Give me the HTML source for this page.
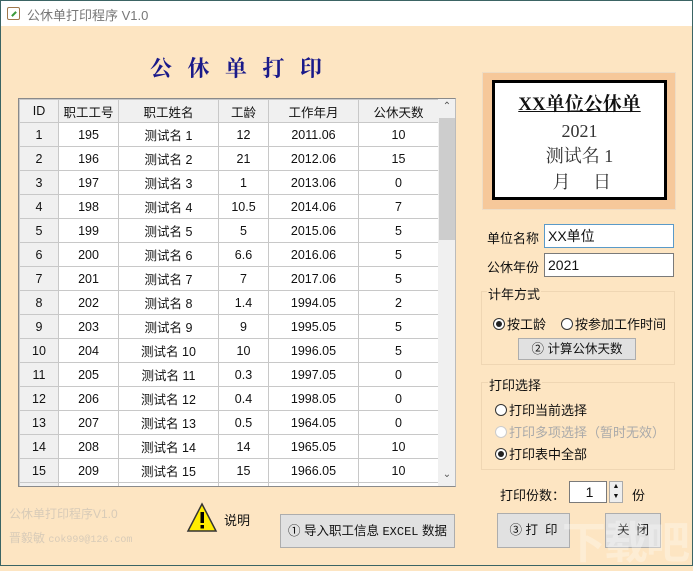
<!DOCTYPE html><html><head><meta charset="utf-8"><style>
*{margin:0;padding:0;box-sizing:border-box}
body{width:693px;height:566px;overflow:hidden;background:#fde5c2;font-family:"Liberation Sans","Noto Sans CJK SC",sans-serif;font-size:13px;color:#111;position:relative}
.abs{position:absolute}
#win{position:absolute;left:0;top:0;width:693px;height:566px;border:1px solid #3b6464}
#title{left:1px;top:1px;width:691px;height:25px;background:#fff;color:#777;font-size:13px}
table{border-collapse:collapse;table-layout:fixed;background:#fff}
td{border:1px solid #c8c8c8;height:24px;text-align:center;font-size:12.5px;padding:0;white-space:nowrap}
tr.h td{background:#f0f0f0;height:23px}
td.id{background:#f0f0f0}
.btn{position:absolute;background:#e1e1e1;border:1px solid #adadad;text-align:center;font-size:12.5px}
.inp{position:absolute;background:#fff;border:1px solid #7a7a7a;padding-left:3px;font-size:14px}
.grp{position:absolute;border:1px solid #efd6b3}
.rad{display:inline-block;width:12px;height:12px;border:1px solid #333;border-radius:50%;background:#fff;vertical-align:-1px;margin-right:2px;position:relative}
.rad.on:after{content:"";position:absolute;left:2px;top:2px;width:6px;height:6px;border-radius:50%;background:#222}
</style></head><body><div id="win"></div>
<div class="abs" id="title"><div class="abs" style="left:6px;top:6px;width:13px;height:13px;border:1px solid #a0774b;border-radius:2px;background:#fff"><div class="abs" style="left:3px;top:5px;width:6px;height:2px;background:#3a9a3a;transform:rotate(-45deg)"></div></div><span class="abs" style="left:26px;top:4px">公休单打印程序 V1.0</span></div>
<div class="abs" style="left:150px;top:52px;font-size:22px;font-weight:bold;color:#1a1a8a;letter-spacing:15.5px;font-family:'Liberation Serif','Noto Serif CJK SC',serif">公休单打印</div>
<div class="abs" style="left:18px;top:98px;width:438px;height:389px;border:1px solid #8a8a8a;border-right-color:#bbb;overflow:hidden;background:#fff">
<table style="width:419px"><colgroup><col style="width:39px"><col style="width:60px"><col style="width:100px"><col style="width:50px"><col style="width:90px"><col style="width:80px"></colgroup>
<tr class="h"><td>ID</td><td>职工工号</td><td>职工姓名</td><td>工龄</td><td>工作年月</td><td>公休天数</td></tr>
<tr><td class="id">1</td><td>195</td><td>测试名 1</td><td>12</td><td>2011.06</td><td>10</td></tr>
<tr><td class="id">2</td><td>196</td><td>测试名 2</td><td>21</td><td>2012.06</td><td>15</td></tr>
<tr><td class="id">3</td><td>197</td><td>测试名 3</td><td>1</td><td>2013.06</td><td>0</td></tr>
<tr><td class="id">4</td><td>198</td><td>测试名 4</td><td>10.5</td><td>2014.06</td><td>7</td></tr>
<tr><td class="id">5</td><td>199</td><td>测试名 5</td><td>5</td><td>2015.06</td><td>5</td></tr>
<tr><td class="id">6</td><td>200</td><td>测试名 6</td><td>6.6</td><td>2016.06</td><td>5</td></tr>
<tr><td class="id">7</td><td>201</td><td>测试名 7</td><td>7</td><td>2017.06</td><td>5</td></tr>
<tr><td class="id">8</td><td>202</td><td>测试名 8</td><td>1.4</td><td>1994.05</td><td>2</td></tr>
<tr><td class="id">9</td><td>203</td><td>测试名 9</td><td>9</td><td>1995.05</td><td>5</td></tr>
<tr><td class="id">10</td><td>204</td><td>测试名 10</td><td>10</td><td>1996.05</td><td>5</td></tr>
<tr><td class="id">11</td><td>205</td><td>测试名 11</td><td>0.3</td><td>1997.05</td><td>0</td></tr>
<tr><td class="id">12</td><td>206</td><td>测试名 12</td><td>0.4</td><td>1998.05</td><td>0</td></tr>
<tr><td class="id">13</td><td>207</td><td>测试名 13</td><td>0.5</td><td>1964.05</td><td>0</td></tr>
<tr><td class="id">14</td><td>208</td><td>测试名 14</td><td>14</td><td>1965.05</td><td>10</td></tr>
<tr><td class="id">15</td><td>209</td><td>测试名 15</td><td>15</td><td>1966.05</td><td>10</td></tr>
<tr><td class="id"></td><td></td><td></td><td></td><td></td><td></td></tr>
</table>
<div class="abs" style="left:419px;top:0;width:18px;height:387px;background:#f0f0f0"><div class="abs" style="left:0;top:2px;width:18px;text-align:center;font-size:10px;color:#555">&#8963;</div><div class="abs" style="left:1px;top:19px;width:16px;height:122px;background:#cdcdcd"></div><div class="abs" style="left:0;top:370px;width:18px;text-align:center;font-size:10px;color:#555">&#8964;</div></div>
</div>
<div class="abs" style="left:482px;top:72px;width:194px;height:138px;background:#f6c89a;border:1px solid #eedcc4"></div>
<div class="abs" style="left:492px;top:80px;width:175px;height:120px;background:#fff;border:3px solid #000;text-align:center;font-family:'Liberation Serif','Noto Serif CJK SC',serif;color:#333">
<div style="margin-top:10px;font-size:19px;font-weight:bold;text-decoration:underline;color:#111;line-height:24px">XX单位公休单</div>
<div style="font-size:18px;line-height:26px;margin-top:1px">2021</div><div style="font-size:18px;line-height:24px">测试名 1</div><div style="font-size:18px;line-height:28px">&nbsp;月&nbsp;&nbsp;&nbsp;&nbsp;&nbsp;日</div></div>
<span class="abs" style="left:487px;top:228px">单位名称</span><div class="inp" style="left:544px;top:224px;width:130px;height:24px;border-color:#5a9ac8;line-height:22px">XX单位</div>
<span class="abs" style="left:487px;top:257px">公休年份</span><div class="inp" style="left:544px;top:253px;width:130px;height:24px;line-height:22px">2021</div>
<div class="grp" style="left:481px;top:291px;width:194px;height:74px"></div><span class="abs" style="left:487px;top:284px;background:#fde5c2;padding:0 1px">计年方式</span>
<span class="abs" style="left:493px;top:314px"><span class="rad on"></span>按工龄</span><span class="abs" style="left:561px;top:314px"><span class="rad"></span>按参加工作时间</span>
<div class="btn" style="left:518px;top:338px;width:118px;height:22px;line-height:20px">② 计算公休天数</div>
<div class="grp" style="left:481px;top:382px;width:194px;height:88px"></div><span class="abs" style="left:488px;top:375px;background:#fde5c2;padding:0 1px">打印选择</span>
<span class="abs" style="left:495px;top:400px"><span class="rad"></span>打印当前选择</span>
<span class="abs" style="left:495px;top:422px;color:#aaa"><span class="rad" style="border-color:#ccc"></span>打印多项选择（暂时无效）</span>
<span class="abs" style="left:495px;top:444px"><span class="rad on"></span>打印表中全部</span>
<span class="abs" style="left:500px;top:485px">打印份数：</span>
<div class="inp" style="left:569px;top:481px;width:38px;height:22px;text-align:center;line-height:20px">1</div>
<div class="abs" style="left:609px;top:481px;width:14px;height:22px;border:1px solid #aaa;background:#eee;font-size:7px;text-align:center;line-height:10px">▲<br>▼</div>
<span class="abs" style="left:632px;top:485px">份</span>
<div class="btn" style="left:497px;top:513px;width:73px;height:35px;line-height:33px">③ 打&nbsp;&nbsp;印</div>
<div class="btn" style="left:605px;top:513px;width:56px;height:35px;line-height:33px">关&nbsp;&nbsp;闭</div>
<div class="btn" style="left:280px;top:514px;width:175px;height:34px;line-height:32px">① 导入职工信息 <span style="font-family:'Liberation Mono',monospace;font-size:12px">EXCEL</span> 数据</div>
<svg class="abs" style="left:186px;top:502px" width="32" height="32"><polygon points="16,2 30,29 2,29" fill="#ffec00" stroke="#333" stroke-width="1.5"/><rect x="14.5" y="10" width="3.5" height="11" fill="#000"/><rect x="14.5" y="23" width="3.5" height="3.5" fill="#000"/></svg>
<span class="abs" style="left:224px;top:510px">说明</span>
<span class="abs" style="left:9px;top:505px;color:#d8cbb8;font-size:12px">公休单打印程序V1.0</span>
<span class="abs" style="left:9px;top:529px;color:#d8cbb8;font-size:12px">晋毅敏 <span style="font-family:'Liberation Mono',monospace;font-size:10px">cok999@126.com</span></span>
<div class="abs" style="left:562px;top:507px;font-size:44px;color:rgba(255,255,255,.3);font-weight:bold;letter-spacing:-2px">下载吧</div>
</body></html>
